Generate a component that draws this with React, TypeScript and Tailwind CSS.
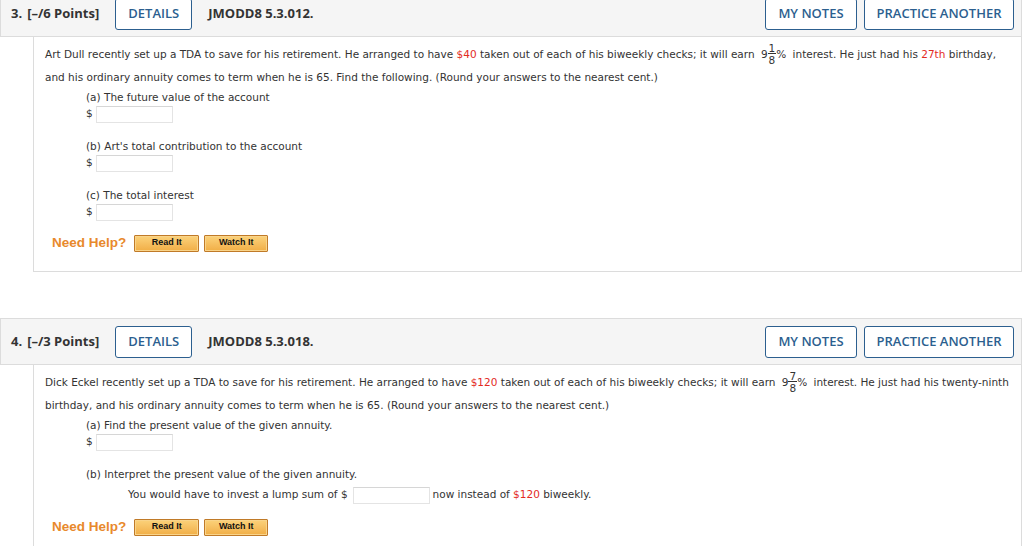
import React from 'react'

const red = 'text-[#e32b1f]'

function Frac({ n, d }: { n: string; d: string }) {
  return (
    <span className="mx-[3px] inline-flex items-center align-middle -translate-y-[1px]">
      <span>9</span>
      <span className="inline-flex flex-col items-center text-[10.5px] leading-[10px]">
        <span className="border-b border-[#333] px-[1px]">{n}</span>
        <span className="px-[1px] pt-[1px]">{d}</span>
      </span>
      <span>%</span>
    </span>
  )
}

function Header({ num, points, code }: { num: string; points: string; code: string }) {
  return (
    <div className="mr-[2px] flex h-[47px] items-center border border-[#dcdcdc] bg-[#f5f5f5] pl-[10px] pr-[7px] font-['Open_Sans',sans-serif] text-[13px] text-[#333]">
      <span className="font-bold">{num}</span>
      <span className="ml-[5px] font-bold">{points}</span>
      <button className="ml-[16px] h-[32px] w-[77px] rounded-[3px] border border-[#2c5f8f] bg-white font-semibold text-[#2c5f8f]">
        DETAILS
      </button>
      <span className="ml-[16px] font-bold">{code}</span>
      <div className="ml-auto flex gap-[7px]">
        <button className="h-[32px] w-[92px] rounded-[3px] border border-[#2c5f8f] bg-white font-semibold text-[#2c5f8f]">
          MY NOTES
        </button>
        <button className="h-[32px] w-[150px] rounded-[3px] border border-[#2c5f8f] bg-white font-semibold text-[#2c5f8f]">
          PRACTICE ANOTHER
        </button>
      </div>
    </div>
  )
}

function Box({ w = 'w-[77px]' }: { w?: string }) {
  return <span className={`inline-block h-[17px] ${w} border border-[#e4e4e4] border-t-[#d6d6d6] bg-white align-middle`} />
}

function Dollar() {
  return (
    <div className="ml-[41px] flex h-[18px] items-center">
      <span className="w-[10px]">$</span>
      <Box />
    </div>
  )
}

function HelpRow({ mt }: { mt: string }) {
  const btn =
    "h-[17px] rounded-[1px] border border-[#c07a28] bg-gradient-to-b from-[#fbd27a] to-[#f1ae45] font-['Liberation_Sans',sans-serif] text-[9px] font-bold text-[#111] shadow-[inset_0_0_0_1px_#f9d48a]"
  return (
    <div className={`${mt} ml-[7px] flex h-[20px] items-center`}>
      <span className="font-['Liberation_Sans',sans-serif] text-[13.5px] font-bold text-[#e8892c]">Need Help?</span>
      <button className={`ml-[8px] w-[65px] ${btn}`}>Read It</button>
      <button className={`ml-[5px] w-[64px] ${btn}`}>Watch It</button>
    </div>
  )
}

export default function App() {
  return (
    <div className="w-[1024px] bg-white font-['DejaVu_Sans',sans-serif] text-[10.5px] text-[#333]">
      <div className="-mt-[10px]">
        <Header num="3." points="[–/6 Points]" code="JMODD8 5.3.012." />
      </div>
      <div className="ml-[33px] mr-[2px] border-x border-b border-[#dcdcdc] bg-white pb-[18px] pl-[11px] pr-[8px] pt-[6px]">
        <p className="leading-[22px]">
          Art Dull recently set up a TDA to save for his retirement. He arranged to have <span className={red}>$40</span> taken
          out of each of his biweekly checks; it will earn <Frac n="1" d="8" /> interest. He just had his{' '}
          <span className={red}>27th</span> birthday, and his ordinary annuity comes to term when he is 65. Find the following.
          (Round your answers to the nearest cent.)
        </p>
        <p className="ml-[41px] mt-[1px] leading-[16px]">(a) The future value of the account</p>
        <Dollar />
        <p className="ml-[41px] mt-[15px] leading-[16px]">(b) Art's total contribution to the account</p>
        <Dollar />
        <p className="ml-[41px] mt-[15px] leading-[16px]">(c) The total interest</p>
        <Dollar />
        <HelpRow mt="mt-[12px]" />
      </div>

      <div className="h-[46px]" />

      <Header num="4." points="[–/3 Points]" code="JMODD8 5.3.018." />
      <div className="ml-[33px] mr-[2px] border-x border-[#dcdcdc] bg-white pb-[19px] pl-[11px] pr-[8px] pt-[6px]">
        <p className="leading-[22px]">
          Dick Eckel recently set up a TDA to save for his retirement. He arranged to have <span className={red}>$120</span> taken
          out of each of his biweekly checks; it will earn <Frac n="7" d="8" /> interest. He just had his twenty-ninth
          birthday, and his ordinary annuity comes to term when he is 65. (Round your answers to the nearest cent.)
        </p>
        <p className="ml-[41px] mt-[1px] leading-[16px]">(a) Find the present value of the given annuity.</p>
        <Dollar />
        <p className="ml-[41px] mt-[15px] leading-[16px]">(b) Interpret the present value of the given annuity.</p>
        <div className="ml-[83px] mt-[4px] flex h-[18px] items-center">
          <span>You would have to invest a lump sum of $</span>
          <span className="ml-[5px]">
            <Box />
          </span>
          <span className="ml-[3px]">
            now instead of <span className={red}>$120</span> biweekly.
          </span>
        </div>
        <HelpRow mt="mt-[13px]" />
      </div>
    </div>
  )
}
